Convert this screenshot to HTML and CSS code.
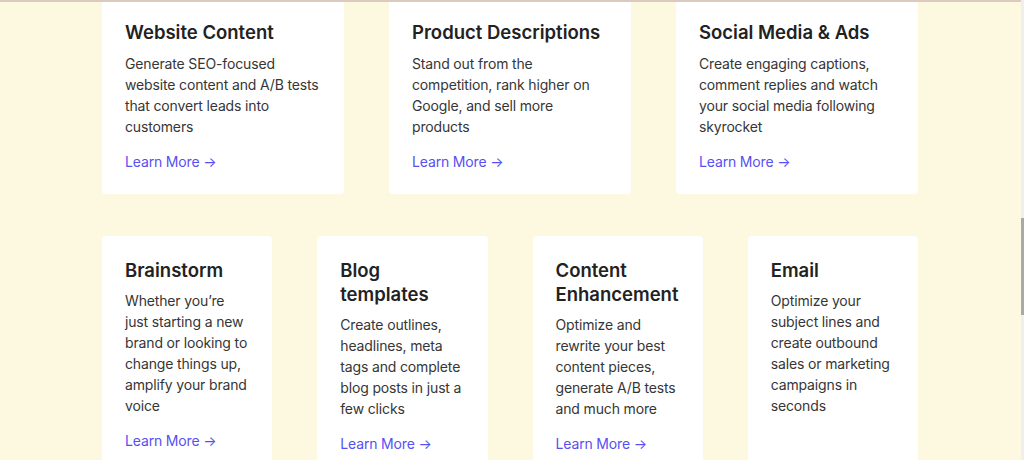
FILE: index.html
```html
<!DOCTYPE html>
<html lang="en">
  <head>
    <meta charset="UTF-8" />
    <meta name="viewport" content="width=device-width, initial-scale=1.0" />
    <title>Use cases</title>
    <link rel="stylesheet" href="styles.css">
  </head>
  <body>
    <div class="page">
      <!-- Верхний ряд -->
      <div class="cards cards-3">
        <div class="card">
          <h3>Website Content</h3>
          <p>Generate SEO-focused website content and A/B tests that convert leads into customers</p>
          <a class="more" href="#">Learn More &rarr;</a>
        </div>
        <div class="card">
          <h3>Product Descriptions</h3>
          <p>Stand out from the competition, rank higher on Google, and sell more products</p>
          <a class="more" href="#">Learn More &rarr;</a>
        </div>
        <div class="card">
          <h3>Social Media &amp; Ads</h3>
          <p>Create engaging captions, comment replies and watch your social media following skyrocket</p>
          <a class="more" href="#">Learn More &rarr;</a>
        </div>
      </div>

      <!-- Нижний ряд -->
      <div class="cards cards-4">
        <div class="card">
          <h3>Brainstorm</h3>
          <p>Whether you’re just starting a new brand or looking to change things up, amplify your brand voice</p>
          <a class="more" href="#">Learn More &rarr;</a>
        </div>
        <div class="card">
          <h3>Blog templates</h3>
          <p>Create outlines, headlines, meta tags and complete blog posts in just a few clicks</p>
          <a class="more" href="#">Learn More &rarr;</a>
        </div>
        <div class="card">
          <h3>Content Enhancement</h3>
          <p>Optimize and rewrite your best content pieces, generate A/B tests and much more</p>
          <a class="more" href="#">Learn More &rarr;</a>
        </div>
        <div class="card">
          <h3>Email</h3>
          <p>Optimize your subject lines and create outbound sales or marketing campaigns in seconds</p>
        </div>
      </div>
    </div>
    <div class="scrollbar"><div class="thumb"></div></div>
  </body>
</html>
```

FILE: styles.css
```css
* {
  box-sizing: border-box;
}

html,
body {
  height: 100%;
}

body {
  margin: 0;
  font-family: Inter, "Noto Sans", Arial, sans-serif;
  background: #fcf9e0;
  border-top: 2px solid #dccabe;
  overflow: hidden;
}

.page {
  width: 816px;
  margin-left: 102px;
}

.cards {
  display: grid;
  column-gap: 45px;
}

.cards-3 {
  grid-template-columns: repeat(3, 1fr);
}

.cards-4 {
  grid-template-columns: repeat(4, 1fr);
  margin-top: 42px;
}

.card {
  background: white;
  border-radius: 4px;
  padding: 18px 23px 22px;
}

.cards-3 .card {
  border-radius: 0 0 4px 4px;
}

.cards-4 .card {
  padding-top: 22px;
}

h3 {
  margin: 0 0 9px;
  font-size: 18.5px;
  line-height: 24px;
  font-weight: 600;
  color: #222;
}

.cards-4 h3 {
  margin-bottom: 8px;
}

p {
  margin: 0;
  font-size: 14px;
  line-height: 21px;
  letter-spacing: -0.15px;
  color: #363636;
}

.more {
  display: inline-block;
  margin-top: 14px;
  font-size: 14px;
  line-height: 21px;
  letter-spacing: -0.15px;
  color: #5850f2;
  text-decoration: none;
}

.scrollbar {
  position: fixed;
  top: 0;
  right: 0;
  width: 3px;
  height: 100%;
  background: #efefef;
}

.thumb {
  margin-top: 218px;
  height: 97px;
  background: #a9a9a9;
}
```
